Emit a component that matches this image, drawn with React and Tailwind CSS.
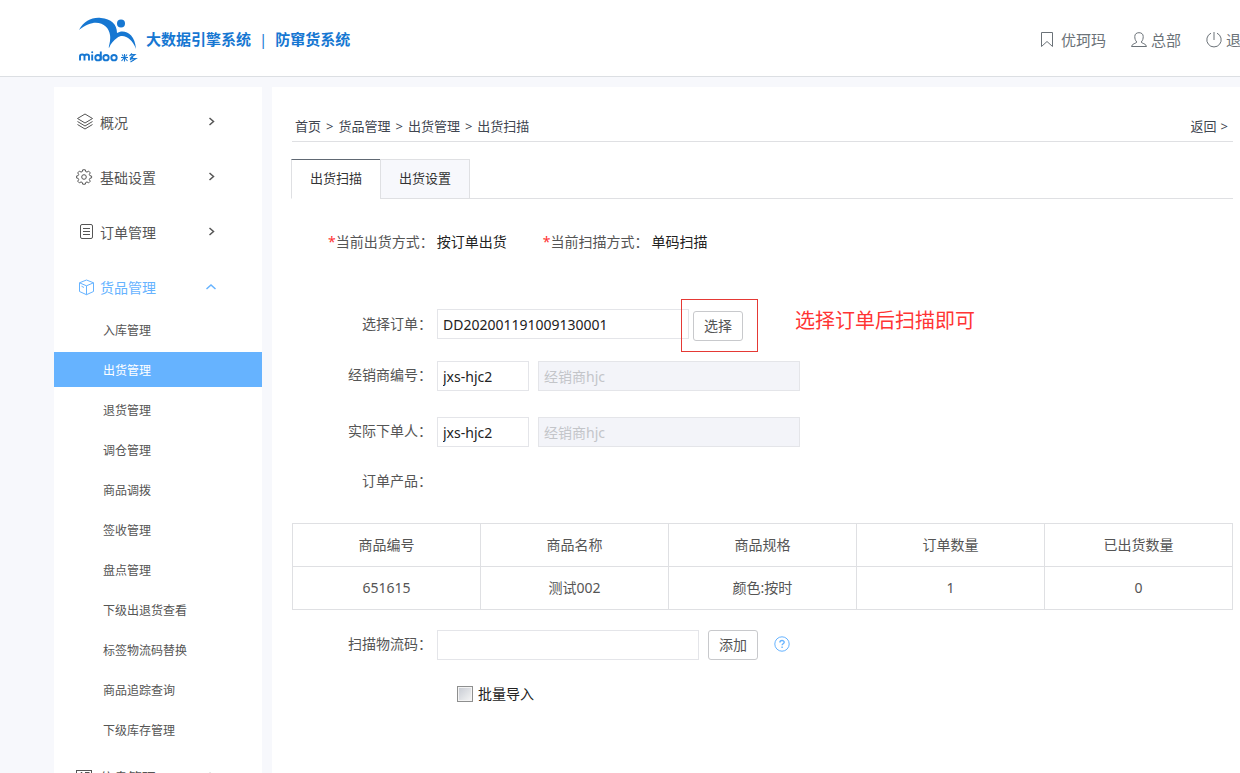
import { useState } from 'react';

const menus = [
  { name: '概况', icon: 'layers' },
  { name: '基础设置', icon: 'gear' },
  { name: '订单管理', icon: 'order' },
  {
    name: '货品管理',
    icon: 'box',
    children: ['入库管理', '出货管理', '退货管理', '调仓管理', '商品调拨', '签收管理', '盘点管理', '下级出退货查看', '标签物流码替换', '商品追踪查询', '下级库存管理'],
  },
  { name: '信息管理', icon: 'report' },
];

const columns = ['商品编号', '商品名称', '商品规格', '订单数量', '已出货数量'];
const products = [['651615', '测试002', '颜色:按时', '1', '0']];

const Icon = ({ name }) => {
  const paths = {
    layers: (
      <>
        <path d="M9 1 16.500 5.500 9 10 1.500 5.500z" />
        <path d="M1.500 8.500 9 13l7.500-4.500M1.500 11.500 9 16l7.500-4.500" />
      </>
    ),
    gear: (
      <>
        <circle cx="8" cy="9" r="2.3" />
        <path d="M6.7 1.8h2.6l.4 1.8 1.3.5 1.6-1 1.7 1.8-1 1.5.6 1.3 1.7.4v1.8l-1.7.4-.6 1.3 1 1.6-1.7 1.7-1.6-1-1.3.6-.4 1.7H6.7l-.4-1.7-1.3-.6-1.6 1-1.7-1.7 1-1.6-.6-1.3-1.7-.4V8.1l1.7-.4.6-1.3-1-1.5 1.7-1.8 1.6 1 1.3-.5z" />
      </>
    ),
    order: (
      <>
        <rect x="4.5" y="1.5" width="12" height="14" rx="1.5" />
        <path d="M7 5.5h7M7 8.5h7M7 11.5h7" />
      </>
    ),
    box: (
      <>
        <path d="M10.500 2 17.500 4.800v8.700l-7 3.200-7-3.200V4.800z" />
        <path d="m3.500 4.800 7 3 7-3M10.500 7.800v8.900M5.500 8.200l2.500 1.300" />
      </>
    ),
    report: (
      <>
        <rect x=".5" y="2.500" width="15" height="13" />
        <path d="M3.500 8.500v-2l1.500-2h1l1.500 2v2M9 4.500h4.500M9 8.500h4.500M3 11.500h10.500" />
      </>
    ),
  };
  return (
    <svg className="h-[18px] w-[18px] shrink-0" viewBox="0 0 18 18" fill="none" stroke="currentColor" strokeWidth="1">
      {paths[name]}
    </svg>
  );
};

const Logo = () => (
  <svg className="h-[46px] w-[60px] shrink-0" viewBox="0 0 60 46" fill="#1677d2" role="img" aria-label="midoo米多">
    <path d="M1 13C6 4 14 0 23 1c10 1 16 6 16 15 6-4 18-1 19 16-4-11-13-16-19-11-3 2-6 5-8 10-1-1 2-6 1-13C31 8 18-1 1 13z" />
    <circle cx="43" cy="6.500" r="4" />
    <g fill="none" stroke="#1677d2" strokeWidth="1.900">
      <path d="M2 43.500v-4.200c0-2.400 4.500-2.400 4.500 0v4.200M6.500 39.300c0-2.400 4.500-2.400 4.500 0v4.200M14.200 37.500v6M22.800 34.500v9" />
      <circle cx="20" cy="40.700" r="2.700" />
      <circle cx="28" cy="40.700" r="2.700" />
      <circle cx="36" cy="40.700" r="2.700" />
    </g>
    <circle cx="14.200" cy="35.300" r="1" />
    <g fill="none" stroke="#1677d2" strokeWidth="1.100">
      <path d="M46.500 37v7.500M43 40.500h7M44 37.500l1.500 2M49 37.500l-1.500 2M46.500 40.500l-3 3.500M46.500 40.500l3 3.500" />
      <path d="M54 36.500l-2.500 2.500M53.500 37.500h3.500l-5 4M53.500 38.500l1.500 1.500M55 40.500l-3 2.500M54.500 41.500h3.500l-5.500 3.500M54.500 42.500l1.500 1" />
    </g>
  </svg>
);

const Chevron = ({ open }) => (
  <svg className="h-3 w-3" viewBox="0 0 12 12" fill="none" stroke="currentColor" strokeWidth="1.5">
    <path d={open ? 'M1.500 8 6 4l4.500 4' : 'M4.500 2 8.500 5.500l-4 3.500'} />
  </svg>
);

const Header = () => (
  <header className="border-b border-[#dcdfe3] bg-white pl-[54px]">
    <div className="flex h-[76px] min-w-[1202px] items-center justify-between pt-1 pl-6">
      <div className="flex items-center gap-2">
        <Logo />
        <h1 className="flex gap-2 pb-[2px] text-[15px] font-bold text-[#1677d2]">
          <span>大数据引擎系统</span>
          <span className="font-normal">|</span>
          <span>防窜货系统</span>
        </h1>
      </div>
      <nav className="flex gap-[25px] text-[15px] text-[#6b7278]">
        <a href="#shop" className="flex items-center gap-[7px]">
          <svg className="h-4 w-[14px]" viewBox="0 0 14 16" fill="none" stroke="currentColor">
            <path d="M1.500.5h11v14L7 9.500l-5.500 5z" />
          </svg>
          优珂玛
        </a>
        <a href="#account" className="flex items-center gap-1">
          <svg className="h-4 w-4" viewBox="0 0 16 16" fill="none" stroke="currentColor">
            <path d="M5.800 10C4.200 8.500 3.800 6.500 3.800 4.500 3.800 2 5.500.700 8 .700s4.200 1.300 4.200 3.800c0 2-.4 4-2 5.500.5 1.800 4.800 1.200 5.300 4.500H.5C1 11.200 5.300 11.800 5.800 10z" />
          </svg>
          总部
        </a>
        <a href="#logout" className="flex items-center gap-1">
          <svg className="h-4 w-4" viewBox="0 0 16 16" fill="none" stroke="currentColor">
            <path d="M5 1.200a7.200 7.200 0 1 0 6 0M8 0v8" />
          </svg>
          退出
        </a>
      </nav>
    </div>
  </header>
);

const Sidebar = ({ current, onSelect }) => (
  <aside className="flex w-[208px] shrink-0 flex-col gap-[5px] bg-white pt-[10px]">
    {menus.map((menu) => (
      <div key={menu.name}>
        <button
          type="button"
          className={`flex h-[50px] w-full items-center gap-[6px] pr-[45px] pl-[22px] text-sm ${menu.children ? 'text-[#66b3ff]' : 'text-[#555]'}`}
        >
          <Icon name={menu.icon} />
          <span className="flex-1 pt-px text-left">{menu.name}</span>
          <Chevron open={Boolean(menu.children)} />
        </button>
        {menu.children && (
          <ul className="flex flex-col gap-[5px]">
            {menu.children.map((item) => (
              <li key={item}>
                <a
                  href="#menu"
                  onClick={() => onSelect(item)}
                  className={`flex h-[35px] items-center pt-[2px] pl-[49px] text-xs ${item === current ? 'bg-[#66b3ff] text-white' : 'text-[#555]'}`}
                >
                  {item}
                </a>
              </li>
            ))}
          </ul>
        )}
      </div>
    ))}
  </aside>
);

const inputStyle = 'h-[30px] border border-[#e4e5e9] px-[5px] text-sm text-[#222]';
const disabledStyle = 'h-[30px] w-[262px] border border-[#e4e5e9] bg-[#f3f4f9] px-[5px] text-sm text-[#c3c5c9]';
const buttonStyle = 'h-[30px] w-[50px] rounded-[3px] border border-[#c8c9cc] bg-white text-sm text-[#555]';
const labelStyle = 'w-[145px] shrink-0 pr-[5px] pb-[2px] text-right';

const App = () => {
  const [current, setCurrent] = useState('出货管理');
  const [orderNo, setOrderNo] = useState('DD202001191009130001');
  const [dealer, setDealer] = useState('jxs-hjc2');
  const [buyer, setBuyer] = useState('jxs-hjc2');
  const [code, setCode] = useState('');

  return (
    <div className="flex h-screen flex-col overflow-hidden bg-[#f7f8fc] font-['Noto_Sans','Noto_Sans_CJK_SC',sans-serif] whitespace-nowrap text-[#555]">
      <Header />
      <div className="flex min-w-[1256px] flex-1 gap-[10px] pt-[10px] pl-[54px]">
        <Sidebar current={current} onSelect={setCurrent} />
        <main className="flex-1 bg-white pt-[26px] pr-[23px] pl-5">
          <div className="flex h-[29px] items-center justify-between border-b border-[#dfe0e3] px-[3px] text-[13px] text-[#404550]">
            <div className="flex gap-[5px]">
              <a href="#home">首页</a>
              <span>&gt;</span>
              <a href="#goods">货品管理</a>
              <span>&gt;</span>
              <a href="#delivery">出货管理</a>
              <span>&gt;</span>
              <span>出货扫描</span>
            </div>
            <a href="#back" className="flex gap-1 pr-[2px]">
              返回 <span>&gt;</span>
            </a>
          </div>

          <div className="mt-[17px] -ml-px flex h-10 text-[13px] text-[#333]">
            <button type="button" className="w-[89px] border-t border-b border-l border-t-[#606873] border-b-white border-l-[#dfe0e3]">出货扫描</button>
            <button type="button" className="w-[90px] border border-[#dfe0e3] bg-[#f7f8fc]">出货设置</button>
            <div className="flex-1 border-b border-[#dfe0e3]" />
          </div>

          <div className="mt-[33px] flex gap-9 pl-9 text-sm">
            <p className="flex">
              <span className="text-[#f33]">*</span>当前出货方式：
              <span className="pl-[3px] text-[#222]">按订单出货</span>
            </p>
            <p className="flex">
              <span className="text-[#f33]">*</span>当前扫描方式：
              <span className="pl-[3px] text-[#222]">单码扫描</span>
            </p>
          </div>

          <div className="mt-12 text-sm">
            <div className="flex h-[50px] items-center">
              <label htmlFor="orderNo" className={labelStyle}>选择订单：</label>
              <div className="relative flex items-start gap-1">
                <input id="orderNo" type="text" value={orderNo} onChange={(e) => setOrderNo(e.target.value)} className={`${inputStyle} w-[252px]`} />
                <button type="button" className={`${buttonStyle} mt-[2px]`}>选择</button>
                <div className="pointer-events-none absolute -top-[10px] left-[244px] h-[53px] w-[77px] border border-[#e53935]" />
              </div>
              <p className="pb-2 pl-[52px] text-xl text-[#ff3434]">选择订单后扫描即可</p>
            </div>
            <div className="mt-[11px] flex items-center gap-[9px]">
              <div className="flex items-center">
                <label htmlFor="dealer" className={labelStyle}>经销商编号：</label>
                <input id="dealer" type="text" value={dealer} onChange={(e) => setDealer(e.target.value)} className={`${inputStyle} w-[92px]`} />
              </div>
              <input type="text" aria-label="经销商名称" value="经销商hjc" disabled className={disabledStyle} />
            </div>
            <div className="mt-[26px] flex items-center gap-[9px]">
              <div className="flex items-center">
                <label htmlFor="buyer" className={labelStyle}>实际下单人：</label>
                <input id="buyer" type="text" value={buyer} onChange={(e) => setBuyer(e.target.value)} className={`${inputStyle} w-[92px]`} />
              </div>
              <input type="text" aria-label="下单人名称" value="经销商hjc" disabled className={disabledStyle} />
            </div>
            <p className={`${labelStyle} mt-6`}>订单产品：</p>
          </div>

          <table className="mt-[30px] w-full table-fixed border-collapse text-center text-sm">
            <thead>
              <tr className="h-[43px]">
                {columns.map((col) => (
                  <th key={col} className="border border-[#dfe0e3] font-normal">{col}</th>
                ))}
              </tr>
            </thead>
            <tbody>
              {products.map((row) => (
                <tr key={row[0]} className="h-[43px]">
                  {row.map((cell, i) => (
                    <td key={columns[i]} className="border border-[#dfe0e3]">{cell}</td>
                  ))}
                </tr>
              ))}
            </tbody>
          </table>

          <div className="mt-5 flex items-center text-sm">
            <label htmlFor="code" className={labelStyle}>扫描物流码：</label>
            <div className="flex items-center gap-[9px]">
              <input id="code" type="text" value={code} onChange={(e) => setCode(e.target.value)} className={`${inputStyle} w-[262px]`} />
              <button type="button" className={buttonStyle}>添加</button>
            </div>
            <button type="button" aria-label="帮助" className="ml-4 pb-[2px] text-[#66b3ff]">
              <svg className="h-4 w-4" viewBox="0 0 16 16" fill="none" stroke="currentColor">
                <circle cx="8" cy="8" r="7.200" />
                <path d="M5.900 6.500c0-2.600 4.300-2.600 4.300-.200 0 1.500-2.100 1.500-2.100 3M8.100 10.600v1.400" strokeWidth="1.400" />
              </svg>
            </button>
          </div>

          <label className="mt-6 flex items-center gap-[5px] pl-[165px] text-sm text-[#222]">
            <input type="checkbox" className="h-4 w-4 appearance-none border border-[#8e8f8f] bg-linear-to-br from-[#c6cad2] to-[#f6f6f6] shadow-[inset_0_0_0_1px_#f4f4f4]" />
            批量导入
          </label>
        </main>
      </div>
    </div>
  );
};

export default App;
